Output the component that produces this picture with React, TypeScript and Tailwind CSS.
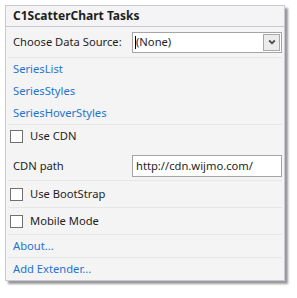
import React from 'react';

const font = { fontFamily: '"Noto Sans", "Open Sans", sans-serif' };

function Divider() {
  return <div className="mx-[2px] h-px bg-[#e6e6e6]" />;
}

function Check({ label, className }: { label: string; className: string }) {
  return (
    <div className={`flex items-center pl-[4px] ${className}`}>
      <span className="h-[13px] w-[13px] border border-[#707070] bg-white" />
      <span className="ml-[7px] text-[#1e1e1e]">{label}</span>
    </div>
  );
}

function Link({ text }: { text: string }) {
  return <div className="flex h-[22px] items-center pl-[7px] text-[#1f73d0]">{text}</div>;
}

export default function App() {
  return (
    <div className="h-[298px] w-[297px] bg-white pl-[5px] pt-[5px]" style={font}>
      <div className="flex h-[276px] w-[280px] flex-col border border-[#c9c9d6] bg-[#f4f4f4] text-[11.2px] leading-none shadow-[3px_3px_2px_rgba(0,0,0,0.4)]">
        <div className="flex h-[21px] items-center border-b border-[#c9c9d6] pl-[7px] text-[12px] font-bold text-[#1e1e1e]">
          C1ScatterChart Tasks
        </div>

        <div className="flex h-[30px] items-center pl-[7px]">
          <span className="w-[119px] text-[#1e1e1e]">Choose Data Source:</span>
          <div className="flex h-[21px] w-[150px] items-center border border-[#a5a5a5] bg-white pl-[2px] pr-[1px]">
            <span className="h-[13px] w-px bg-black" />
            <span className="flex-1 text-[#1e1e1e]">(None)</span>
            <span className="flex h-[17px] w-[17px] items-center justify-center border border-[#a8a8a8] bg-[#ececec]">
              <svg width="8" height="6" viewBox="0 0 8 6">
                <path d="M1.2 1.5 L4 4.3 L6.8 1.5" fill="none" stroke="#4a4a4a" strokeWidth="1.8" />
              </svg>
            </span>
          </div>
        </div>
        <Divider />

        <Link text="SeriesList" />
        <Link text="SeriesStyles" />
        <Link text="SeriesHoverStyles" />
        <Divider />

        <Check label="Use CDN" className="h-[22px]" />
        <div className="flex items-center pb-[3px] pl-[7px] pt-[8px]">
          <span className="w-[119px] text-[#1e1e1e]">CDN path</span>
          <div className="flex h-[22px] w-[150px] items-center border border-[#a5a5a5] bg-white pl-[3px] text-[#1e1e1e]">
            http://cdn.wijmo.com/
          </div>
        </div>
        <Divider />

        <Check label="Use BootStrap" className="h-[26px]" />
        <Divider />
        <Check label="Mobile Mode" className="h-[26px]" />
        <Divider />

        <Link text="About..." />
        <Divider />
        <Link text="Add Extender..." />
      </div>
    </div>
  );
}
